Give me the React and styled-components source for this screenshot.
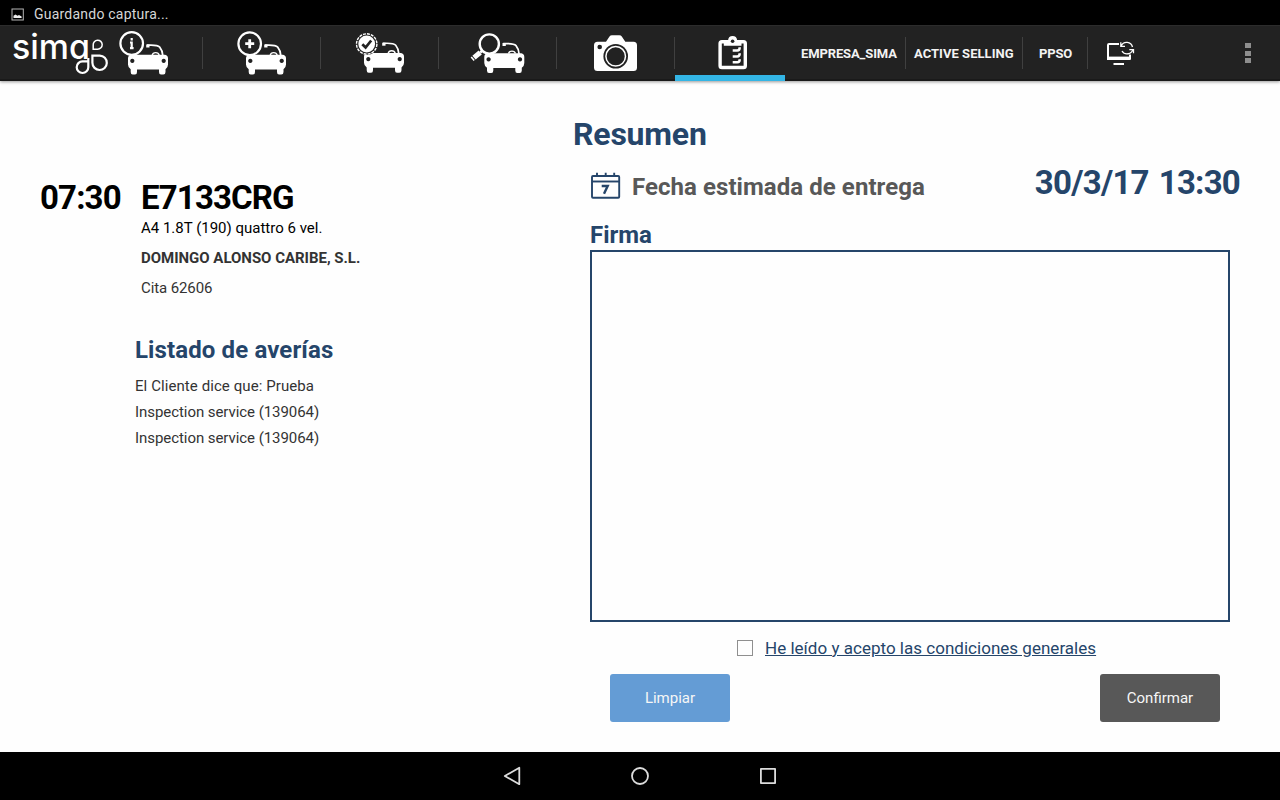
import React from "react";
import styled, { createGlobalStyle } from "styled-components";

const navy = "#25456a";

const GlobalStyle = createGlobalStyle`
  * { box-sizing: border-box; }
  html, body { margin: 0; padding: 0; }
  body { font-family: Roboto, "Liberation Sans", sans-serif; background: #fff; }
`;

const Screen = styled.div`
  width: 1280px;
  height: 800px;
  display: flex;
  flex-direction: column;
  overflow: hidden;
  background: #fefefe;
`;

const StatusBar = styled.div`
  height: 25px;
  flex: none;
  display: flex;
  align-items: center;
  gap: 10px;
  padding: 3px 0 0 11px;
  background: #000;
  color: #d6d6d6;
  font-size: 14px;
  letter-spacing: 0.22px;
  line-height: 20px;
`;

const Toolbar = styled.header`
  height: 56px;
  flex: none;
  display: flex;
  background: #222;
  border-top: 1px solid #2c2c2c;
  border-bottom: 2px solid #1a1a1a;
  box-shadow: 0 1px 3px rgba(0, 0, 0, 0.4);
  svg { display: block; flex: none; }
`;

const LogoBox = styled.div`
  width: 115px;
  margin-top: -1px;
`;

const Tab = styled.div`
  width: ${(p) => p.$width || 118}px;
  height: 55px;
  margin-top: -1px;
  display: flex;
  flex-direction: column;
  align-items: ${(p) => (p.$start ? "flex-start" : "center")};
  padding: 5px ${(p) => (p.$start ? 0 : 2)}px 0 0;
  background: linear-gradient(#404040, #404040) right 12px / 1px 32px no-repeat;
  ${(p) => p.$active && "background: none; height: 56px; border-bottom: 6px solid #33b5e5;"}
`;

const Account = styled.div`
  width: ${(p) => p.$width}px;
  padding-left: ${(p) => p.$inset}px;
  margin-top: -1px;
  height: 55px;
  font-size: 13px;
  font-weight: 700;
  letter-spacing: ${(p) => p.$tracking || 0}px;
  line-height: 57px;
  color: #f3f3f3;
  white-space: nowrap;
  background: linear-gradient(#404040, #404040) right 12px / 1px 32px no-repeat;
`;

const SyncButton = styled.div`
  padding: 13px 0 0 17px;
`;

const Overflow = styled.div`
  margin-left: auto;
  padding: 17px 29px 0 0;
  display: grid;
  align-content: start;
  gap: 2.5px;
  span { width: 6px; height: 5px; background: #8e8e8e; }
`;

const Content = styled.main`
  flex: 1;
  display: flex;
`;

const VehiclePane = styled.section`
  width: 573px;
  padding: 100px 0 0 40px;
`;

const VehicleGrid = styled.div`
  display: grid;
  grid-template-columns: 101px 1fr;
`;

const Headline = styled.div`
  height: 32px;
  padding-top: 1px;
  font-size: 33px;
  font-weight: 700;
  line-height: 32px;
  letter-spacing: -0.85px;
  color: #000;
`;

const Line = styled.div`
  font-size: 15px;
  line-height: 30px;
  letter-spacing: ${(p) => p.$tracking || 0}px;
  font-weight: ${(p) => (p.$bold ? 700 : 400)};
  color: ${(p) => p.$color || "#333"};
`;

const Faults = styled.div`
  margin: 33px 0 0 95px;
`;

const SubTitle = styled.h2`
  margin: 0;
  font-size: 24px;
  line-height: 28px;
  font-weight: 700;
  letter-spacing: ${(p) => p.$tracking || 0}px;
  color: ${(p) => p.$color || navy};
`;

const FaultList = styled.ul`
  margin: 9px 0 0;
  padding: 0;
  list-style: none;
  font-size: 15px;
  line-height: 26px;
  color: #333;
`;

const Fault = styled.li`
  letter-spacing: ${(p) => p.$tracking}px;
`;

const SummaryPane = styled.section`
  flex: 1;
  padding-top: 33px;
`;

const Title = styled.h1`
  margin: 0;
  font-size: 32px;
  line-height: 40px;
  font-weight: 700;
  letter-spacing: -0.2px;
  color: ${navy};
`;

const DeliveryRow = styled.div`
  display: flex;
  height: 57px;
  padding: 10px 40px 0 17px;
`;

const DeliveryLabel = styled.div`
  display: flex;
  padding-top: 7px;
  svg { margin-right: 10px; }
  h2 { margin-top: 2px; }
`;

const DeliveryDate = styled.div`
  margin-left: auto;
  padding-top: 1px;
  font-size: 33px;
  line-height: 36px;
  font-weight: 700;
  letter-spacing: -0.75px;
  word-spacing: 2.5px;
  color: ${navy};
`;

const Signature = styled.div`
  padding: 10px 50px 0 17px;
`;

const Pad = styled.div`
  margin-top: 1px;
  height: 372px;
  border: 2px solid ${navy};
`;

const Terms = styled.div`
  display: flex;
  align-items: center;
  height: 26px;
  margin-top: 13px;
  padding-left: 147px;
  gap: 12px;
`;

const CheckBox = styled.span`
  width: 16px;
  height: 16px;
  border: 1px solid #8f8f8f;
`;

const TermsLink = styled.a`
  font-size: 17px;
  line-height: 26px;
  letter-spacing: 0.02px;
  color: ${navy};
  text-decoration: underline;
`;

const Actions = styled.div`
  display: flex;
  justify-content: space-between;
  margin-top: 13px;
  padding: 0 10px 0 20px;
`;

const Button = styled.button`
  width: 120px;
  height: 48px;
  border: 0;
  border-radius: 3px;
  font: 400 15px Roboto, "Liberation Sans", sans-serif;
  color: #f6f6f6;
  background: ${(p) => (p.$primary ? "#649cd5" : "#585858")};
`;

const NavBar = styled.footer`
  height: 48px;
  flex: none;
  display: flex;
  justify-content: center;
  align-items: center;
  gap: 104px;
  background: #000;
`;

const LogoText = styled.text`
  font-family: Inter, Roboto, sans-serif;
  font-size: 34px;
  font-weight: 500;
  font-feature-settings: "cv11";
  fill: #fff;
`;

function Logo() {
  return (
    <svg width="115" height="54" viewBox="0 25 115 54">
      <LogoText x="12" y="59" textLength="78" lengthAdjust="spacingAndGlyphs">sima</LogoText>
      <g fill="none" stroke="#fff" strokeWidth="2.2">
        <path d="M93.2 49.2V45a4.5 4.5 0 1 1 4.5 4.2z" strokeWidth="1.5" />
        <path d="M92.4 55.6h7.4a7.2 7.2 0 1 1-7.4 7.2z" />
        <path d="M88.3 58v9.2a5.8 5.8 0 1 1-5.8-5.8h5.8" />
      </g>
    </svg>
  );
}

function Car({ x, y }) {
  return (
    <g transform={`translate(${x} ${y})`}>
      <path
        fill="#fff"
        fillRule="evenodd"
        d="M3 .3H37Q40 1 40 4V10Q40 13 37.5 14.8V17.5Q37.5 20 35.3 20H33Q31 20 31 17.5V15H9V17.5Q9 20 7 20H4.7Q2.7 20 2.7 17.5V14.8Q0 13 0 10V4Q0 1 3 .3zM4.3 4.3a2.1 2.1 0 1 0 .01 0zM35.7 4.3a2.1 2.1 0 1 0 .01 0z"
      />
      <path d="M18.2-8.5h3.3" stroke="#fff" strokeWidth="3" />
      <path
        d="M19-9.3C25-9.7 30-9.3 31.7-7.4C33.5-5.2 34.6-2.5 34.8 1"
        fill="none"
        stroke="#fff"
        strokeWidth="1.7"
      />
      <path d="M24.2 .5C25-2.7 30.3-2.7 31.2 .5" fill="none" stroke="#fff" strokeWidth="1.4" />
    </g>
  );
}

const Icon = ({ children }) => (
  <svg width="57" height="46" viewBox="0 0 57 46">{children}</svg>
);

function InfoCarIcon() {
  return (
    <Icon>
      <Car x={13} y={24.5} />
      <circle cx="16.7" cy="13.5" r="11.3" fill="#222" stroke="#fff" strokeWidth="2.2" />
      <path d="M16.7 8v2.4M15 12.5h1.7v5.7M15 18.2h3.6" stroke="#fff" strokeWidth="2.2" fill="none" />
    </Icon>
  );
}

function AddCarIcon() {
  return (
    <Icon>
      <Car x={13} y={24.5} />
      <circle cx="16.7" cy="13.7" r="11.3" fill="#222" stroke="#fff" strokeWidth="2.2" />
      <path d="M16.7 9.2v9M12.2 13.7h9" stroke="#fff" strokeWidth="2.8" />
    </Icon>
  );
}

function CheckCarIcon() {
  return (
    <Icon>
      <Car x={13} y={22.7} />
      <circle cx="15.7" cy="14" r="11" fill="#222" />
      <circle cx="15.7" cy="14" r="10.2" fill="none" stroke="#fff" strokeWidth="1.4" strokeDasharray="3 1" />
      <circle cx="15.7" cy="14" r="8.4" fill="#fff" />
      <path d="M11.3 14.2l3.3 3.3 5.6-7" fill="none" stroke="#222" strokeWidth="2.7" />
    </Icon>
  );
}

function SearchCarIcon() {
  return (
    <Icon>
      <Car x={15.3} y={23} />
      <circle cx="20.3" cy="14" r="9.6" fill="#222" stroke="#fff" strokeWidth="2.4" />
      <path d="M13.2 20.7l-2 1.8" stroke="#fff" strokeWidth="2.5" />
      <path d="M11.2 22.5l-6.2 5.2" stroke="#fff" strokeWidth="5" />
      <path d="M4.3 28.2l-1.2 1" stroke="#fff" strokeWidth="4.6" />
    </Icon>
  );
}

function CameraIcon() {
  return (
    <Icon>
      <path
        fill="#fff"
        d="M10.5 11.8H19L22.5 6.5Q23.3 5.2 25 5.2H32.3Q34 5.2 34.8 6.5L38.3 11.8H46.5Q50 11.8 50 15.3V37.5Q50 41 46.5 41H10.5Q7 41 7 37.5V15.3Q7 11.8 10.5 11.8z"
      />
      <circle cx="12.7" cy="17" r="2.3" fill="#222" />
      <circle cx="28.7" cy="26.3" r="12.3" fill="#222" />
      <circle cx="28.7" cy="26.3" r="9.8" fill="none" stroke="#fff" strokeWidth="1.5" />
    </Icon>
  );
}

function ClipboardIcon() {
  return (
    <Icon>
      <rect x="19.1" y="11.7" width="25.2" height="25.8" rx="1.8" fill="none" stroke="#fff" strokeWidth="3.4" />
      <path
        fill="#fff"
        d="M22.8 15.8V12.5Q22.8 10.4 25 10.4H27Q27.5 6 31.6 6T36.2 10.4H38.3Q40.5 10.4 40.5 12.5V15.8z"
      />
      <circle cx="31.6" cy="11.2" r="1.8" fill="#222" />
      <path
        d="M31.7 20.6H36.3Q38.7 20.6 38.7 17.3M31.7 26.5H36.3Q38.7 26.5 38.7 23.3M31.7 32.3H36.3Q38.7 32.3 38.7 29.2"
        fill="none"
        stroke="#fff"
        strokeWidth="2.5"
      />
    </Icon>
  );
}

function SyncIcon() {
  return (
    <svg width="30" height="26" viewBox="0 0 30 26" fill="none" stroke="#fff">
      <path d="M14 5H4Q3 5 3 6V19H25V15.5" strokeWidth="2" />
      <path d="M2 19.3H25.7" strokeWidth="3.4" />
      <path d="M8.5 25H19" strokeWidth="2" />
      <path
        d="M16.2 7A6 6 0 0 1 27.5 8M28 10A6 6 0 0 1 17 12M15.8 3.3V7.4H20M28.5 14.3V10.6H24.3"
        strokeWidth="1.3"
      />
    </svg>
  );
}

function CalendarIcon() {
  return (
    <svg width="32" height="30" viewBox="0 0 32 30" fill="none" stroke={navy}>
      <rect x="2" y="5" width="27.2" height="21.8" rx="1" strokeWidth="1.9" />
      <path d="M2 10.5H29.2" strokeWidth="1.9" />
      <path d="M7 1.8V6M15.7 1.8V6M24.2 1.8V6" strokeWidth="1.9" />
      <path d="M11.7 15H17.7L14 22.7" strokeWidth="2.4" />
    </svg>
  );
}

function NavIcon({ children }) {
  return (
    <svg width="24" height="24" viewBox="0 0 24 24" fill="none" stroke="#dcdcdc" strokeWidth="1.8" strokeLinejoin="round">
      {children}
    </svg>
  );
}

export default function App() {
  return (
    <Screen>
      <GlobalStyle />
      <StatusBar>
        <svg width="13" height="13" viewBox="0 0 13 13">
          <rect x="1" y="1" width="11.3" height="11" fill="none" stroke="#b5b5b5" />
          <path d="M2.5 10V7.7L4.5 6.5l2 1.2 1.5-.7 2.6 1.5V10z" fill="#eee" />
        </svg>
        <span>Guardando captura...</span>
      </StatusBar>
      <Toolbar>
        <LogoBox><Logo /></LogoBox>
        <Tab $width={88} $start><InfoCarIcon /></Tab>
        <Tab><AddCarIcon /></Tab>
        <Tab><CheckCarIcon /></Tab>
        <Tab><SearchCarIcon /></Tab>
        <Tab><CameraIcon /></Tab>
        <Tab $width={110} $active><ClipboardIcon /></Tab>
        <Account $width={121} $inset={16} $tracking={-0.12}>EMPRESA_SIMA</Account>
        <Account $width={117} $inset={8} $tracking={0.04}>ACTIVE SELLING</Account>
        <Account $width={65} $inset={16} $tracking={-0.15}>PPSO</Account>
        <SyncButton><SyncIcon /></SyncButton>
        <Overflow><span /><span /><span /></Overflow>
      </Toolbar>
      <Content>
        <VehiclePane>
          <VehicleGrid>
            <Headline>07:30</Headline>
            <div>
              <Headline>E7133CRG</Headline>
              <Line $color="#000">A4 1.8T (190) quattro 6 vel.</Line>
              <Line $bold $tracking={-0.02}>DOMINGO ALONSO CARIBE, S.L.</Line>
              <Line $tracking={-0.1}>Cita 62606</Line>
            </div>
          </VehicleGrid>
          <Faults>
            <SubTitle $tracking={0.12}>Listado de averías</SubTitle>
            <FaultList>
              <Fault $tracking={0.08}>El Cliente dice que: Prueba</Fault>
              <Fault $tracking={-0.06}>Inspection service (139064)</Fault>
              <Fault $tracking={-0.06}>Inspection service (139064)</Fault>
            </FaultList>
          </Faults>
        </VehiclePane>
        <SummaryPane>
          <Title>Resumen</Title>
          <DeliveryRow>
            <DeliveryLabel>
              <CalendarIcon />
              <SubTitle $color="#585858" $tracking={0.06}>Fecha estimada de entrega</SubTitle>
            </DeliveryLabel>
            <DeliveryDate>30/3/17 13:30</DeliveryDate>
          </DeliveryRow>
          <Signature>
            <SubTitle>Firma</SubTitle>
            <Pad />
            <Terms>
              <CheckBox />
              <TermsLink>He leído y acepto las condiciones generales</TermsLink>
            </Terms>
            <Actions>
              <Button $primary>Limpiar</Button>
              <Button>Confirmar</Button>
            </Actions>
          </Signature>
        </SummaryPane>
      </Content>
      <NavBar>
        <NavIcon><path d="M19.3 3.8V20.2L4.8 12z" /></NavIcon>
        <NavIcon><circle cx="12" cy="12" r="8" /></NavIcon>
        <NavIcon><rect x="4.9" y="4.9" width="14.2" height="14.2" /></NavIcon>
      </NavBar>
    </Screen>
  );
}
